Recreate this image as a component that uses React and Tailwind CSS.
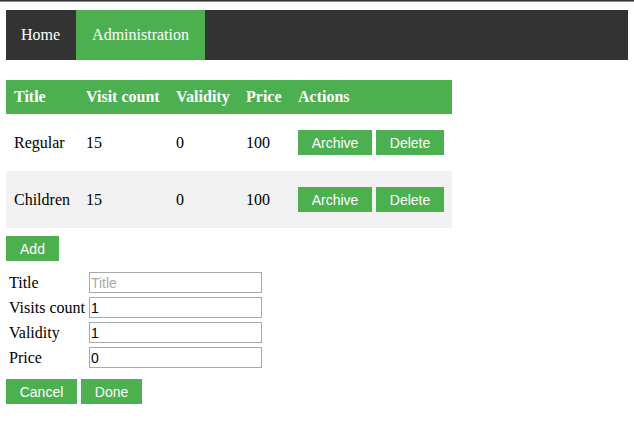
import React, { useState } from "react";

const sans = "font-[Arial,Liberation_Sans,sans-serif]";

const tickets = [
  { title: "Regular", visits: 15, validity: 0, price: 100 },
  { title: "Children", visits: 15, validity: 0, price: 100 },
];

const GreenButton = ({ children, className = "" }) => (
  <button
    className={`h-[25px] bg-[#4caf50] text-white text-[14px] leading-none ${sans} ${className}`}
  >
    {children}
  </button>
);

const App = () => {
  const [form, setForm] = useState({ title: "", visits: "1", validity: "1", price: "0" });

  const fields = [
    { key: "title", label: "Title", placeholder: "Title" },
    { key: "visits", label: "Visits count" },
    { key: "validity", label: "Validity" },
    { key: "price", label: "Price" },
  ];

  return (
    <div className="bg-white min-h-screen font-[Liberation_Serif,Times_New_Roman,serif] text-black text-[16px] leading-[normal]">
      <div className="h-px bg-[#333]"></div>
      <div className="h-px bg-[#888]"></div>

      <div className="px-[6px] pt-[8px]">
        <ul className="flex bg-[#333] h-[50px]">
          <li>
            <a className="flex items-center h-[50px] pl-[15px] pr-[16px] text-white">Home</a>
          </li>
          <li>
            <a className="flex items-center h-[50px] px-[16px] text-white bg-[#4caf50]">Administration</a>
          </li>
        </ul>

        <table className="mt-[20px] w-[446px] border-collapse">
          <thead>
            <tr className="bg-[#4caf50] text-white h-[34px] text-left">
              <th className="pl-[8px] w-[72px] font-bold">Title</th>
              <th className="pl-[8px] w-[90px] font-bold">Visit count</th>
              <th className="pl-[8px] w-[70px] font-bold">Validity</th>
              <th className="pl-[8px] w-[52px] font-bold">Price</th>
              <th className="pl-[8px] font-bold">Actions</th>
            </tr>
          </thead>
          <tbody>
            {tickets.map((t, i) => (
              <tr key={t.title} className={`h-[57px] ${i % 2 === 1 ? "bg-[#f2f2f2]" : "bg-white"}`}>
                <td className="pl-[8px]">{t.title}</td>
                <td className="pl-[8px]">{t.visits}</td>
                <td className="pl-[8px]">{t.validity}</td>
                <td className="pl-[8px]">{t.price}</td>
                <td className="pl-[8px]">
                  <div className="flex gap-[4px]">
                    <GreenButton className="w-[74px]">Archive</GreenButton>
                    <GreenButton className="w-[68px]">Delete</GreenButton>
                  </div>
                </td>
              </tr>
            ))}
          </tbody>
        </table>

        <GreenButton className="mt-[8px] w-[53px]">Add</GreenButton>

        <table className="mt-[8px] border-separate border-spacing-[2px]">
          <tbody>
            {fields.map((f) => (
              <tr key={f.key}>
                <td className="p-px whitespace-nowrap">{f.label}</td>
                <td className="p-px">
                  <input
                    value={form[f.key]}
                    placeholder={f.placeholder}
                    onChange={(e) => setForm({ ...form, [f.key]: e.target.value })}
                    className={`block w-[173px] h-[21px] border border-[#a9a9a9] px-[1px] text-[14px] text-black placeholder-[#a9a9a9] outline-none ${sans}`}
                  />
                </td>
              </tr>
            ))}
          </tbody>
        </table>

        <div className="mt-[8px] flex gap-[4px]">
          <GreenButton className="w-[71px]">Cancel</GreenButton>
          <GreenButton className="w-[61px]">Done</GreenButton>
        </div>
      </div>
    </div>
  );
};

export default App;
